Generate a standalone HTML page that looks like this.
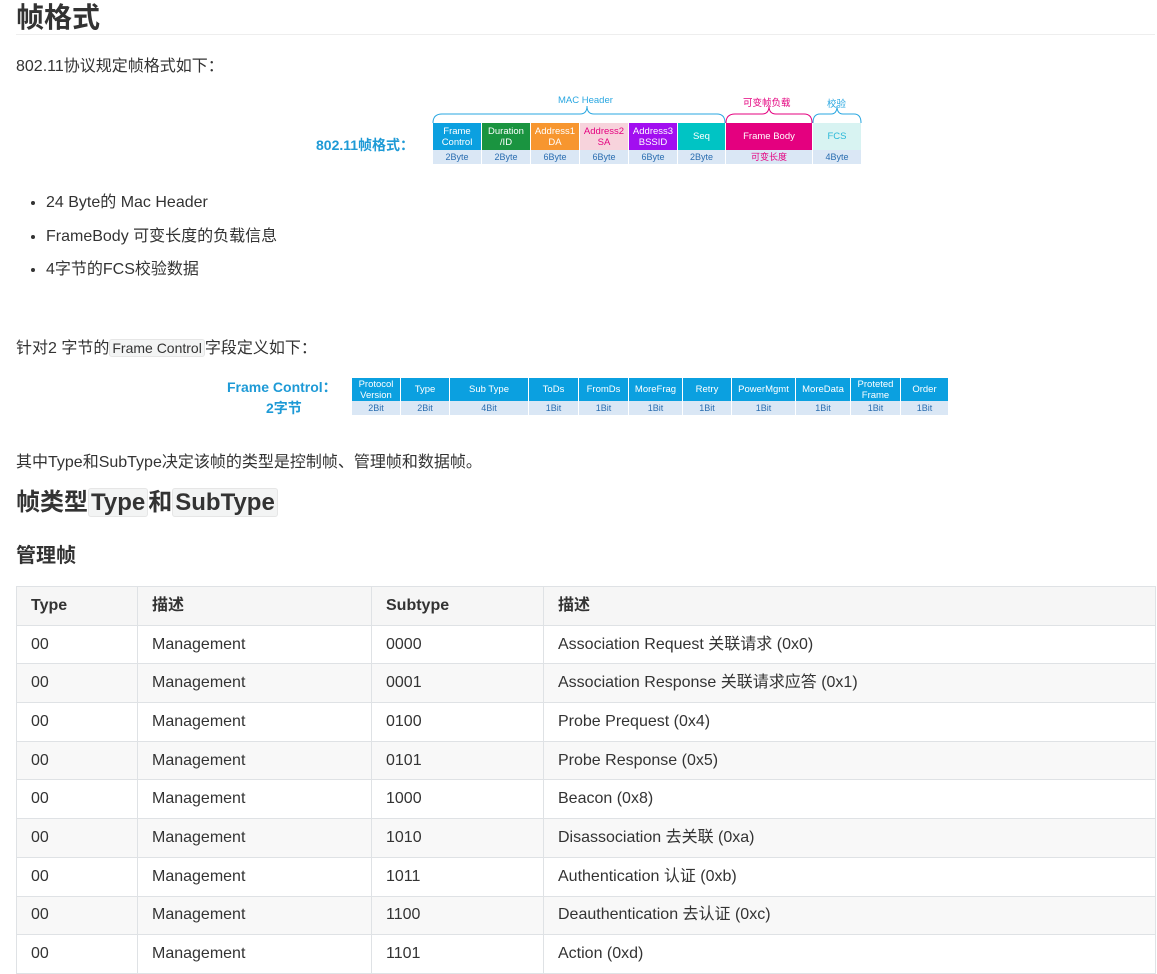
<!DOCTYPE html><html><head><meta charset="utf-8"><style>
body{margin:0;background:#fff;color:#333;font-family:"Liberation Sans","Noto Sans CJK SC",sans-serif;font-size:16px;width:1157px;height:958px;overflow:hidden;position:relative}
.a{position:absolute;white-space:nowrap}
h1{position:absolute;left:16px;top:0;margin:0;font-size:28px;font-weight:bold;line-height:36px;width:1139px;border-bottom:1px solid #eee;height:34px}
code{background:#f3f4f4;border:1px solid #e6e6e6;border-radius:3px;padding:0 2px;font-family:"Liberation Sans","Noto Sans CJK SC",sans-serif}
.c{position:absolute;color:#fff;font-size:9.5px;line-height:11px;text-align:center;display:flex;align-items:center;justify-content:center}
.b{position:absolute;background:#dae7f5;color:#2a6db0;font-size:9px;text-align:center;line-height:14px}
table{position:absolute;left:16px;top:586px;width:1140px;border-collapse:collapse;font-size:16px;table-layout:fixed}
tr{height:38.7px}
td,th{border:1px solid #dfe2e5;padding:0 14px;text-align:left;line-height:20px;height:20px;vertical-align:middle;overflow:hidden;white-space:nowrap}
th{background:#f6f6f6;font-weight:bold}
tr:nth-child(odd) td{background:#f8f8f8}
li{margin:0;height:33.5px}
</style></head><body>
<h1>帧格式</h1>
<div class="a" style="left:16px;top:52px">802.11协议规定帧格式如下：</div>
<svg class="a" style="left:0;top:0" width="1157" height="180">
<path d="M433 123 Q433 114 442 114 L580 114 Q587 114 587 106 Q587 114 594 114 L717 114 Q725 114 725 123" fill="none" stroke="#29a7e1"/>
<path d="M726 123 Q726 114 735 114 L762 114 Q769 114 769 106 Q769 114 776 114 L804 114 Q812 114 812 123" fill="none" stroke="#e4007f"/>
<path d="M813 123 Q813 114 820 114 L831 114 Q837 114 837 106 Q837 114 843 114 L854 114 Q861 114 861 123" fill="none" stroke="#29a7e1"/>
</svg>
<div class="a" style="left:558px;top:95px;font-size:9.5px;color:#29a7e1">MAC Header</div>
<div class="a" style="left:743px;top:95px;font-size:9.5px;color:#e4007f">可变帧负载</div>
<div class="a" style="left:827px;top:96px;font-size:9.5px;color:#29a7e1">校验</div>
<div class="a" style="left:316px;top:135px;font-size:14px;font-weight:bold;color:#1e9ad6">802.11帧格式：</div>
<div class="c" style="left:433px;top:123px;width:48px;height:27px;background:#0ba0e0">Frame<br>Control</div>
<div class="c" style="left:482px;top:123px;width:48px;height:27px;background:#1a9440">Duration<br>/ID</div>
<div class="c" style="left:531px;top:123px;width:48px;height:27px;background:#f7962f">Address1<br>DA</div>
<div class="c" style="left:580px;top:123px;width:48px;height:27px;background:#f7d3dc;color:#e4007f">Address2<br>SA</div>
<div class="c" style="left:629px;top:123px;width:48px;height:27px;background:#a20ef0">Address3<br>BSSID</div>
<div class="c" style="left:678px;top:123px;width:47px;height:27px;background:#00c4c4">Seq</div>
<div class="c" style="left:726px;top:123px;width:86px;height:27px;background:#e4007f">Frame Body</div>
<div class="c" style="left:813px;top:123px;width:48px;height:27px;background:#d8f3f2;color:#29b8d8">FCS</div>
<div class="b" style="left:433px;top:150px;width:48px">2Byte</div>
<div class="b" style="left:482px;top:150px;width:48px">2Byte</div>
<div class="b" style="left:531px;top:150px;width:48px">6Byte</div>
<div class="b" style="left:580px;top:150px;width:48px">6Byte</div>
<div class="b" style="left:629px;top:150px;width:48px">6Byte</div>
<div class="b" style="left:678px;top:150px;width:47px">2Byte</div>
<div class="b" style="left:726px;top:150px;width:86px;color:#e4007f">可变长度</div>
<div class="b" style="left:813px;top:150px;width:48px">4Byte</div>
<ul style="position:absolute;left:6px;top:186px;margin:0;padding-left:40px;line-height:33.5px">
<li>24 Byte的 Mac Header</li><li>FrameBody 可变长度的负载信息</li><li>4字节的FCS校验数据</li></ul>
<div class="a" style="left:16px;top:334px">针对2 字节的<code style="font-size:14px">Frame Control</code>字段定义如下：</div>
<div class="a" style="left:227px;top:377px;font-size:14px;font-weight:bold;color:#1e9ad6">Frame Control：</div>
<div class="a" style="left:266px;top:398px;font-size:14px;font-weight:bold;color:#1e9ad6">2字节</div>
<div class="c" style="left:352px;top:378px;width:48px;height:23px;background:#0ba0e0">Protocol<br>Version</div>
<div class="c" style="left:401px;top:378px;width:48px;height:23px;background:#0ba0e0">Type</div>
<div class="c" style="left:450px;top:378px;width:78px;height:23px;background:#0ba0e0">Sub Type</div>
<div class="c" style="left:529px;top:378px;width:49px;height:23px;background:#0ba0e0">ToDs</div>
<div class="c" style="left:579px;top:378px;width:49px;height:23px;background:#0ba0e0">FromDs</div>
<div class="c" style="left:629px;top:378px;width:53px;height:23px;background:#0ba0e0">MoreFrag</div>
<div class="c" style="left:683px;top:378px;width:48px;height:23px;background:#0ba0e0">Retry</div>
<div class="c" style="left:732px;top:378px;width:63px;height:23px;background:#0ba0e0">PowerMgmt</div>
<div class="c" style="left:796px;top:378px;width:54px;height:23px;background:#0ba0e0">MoreData</div>
<div class="c" style="left:851px;top:378px;width:49px;height:23px;background:#0ba0e0">Proteted<br>Frame</div>
<div class="c" style="left:901px;top:378px;width:47px;height:23px;background:#0ba0e0">Order</div>
<div class="b" style="left:352px;top:401px;width:48px">2Bit</div>
<div class="b" style="left:401px;top:401px;width:48px">2Bit</div>
<div class="b" style="left:450px;top:401px;width:78px">4Bit</div>
<div class="b" style="left:529px;top:401px;width:49px">1Bit</div>
<div class="b" style="left:579px;top:401px;width:49px">1Bit</div>
<div class="b" style="left:629px;top:401px;width:53px">1Bit</div>
<div class="b" style="left:683px;top:401px;width:48px">1Bit</div>
<div class="b" style="left:732px;top:401px;width:63px">1Bit</div>
<div class="b" style="left:796px;top:401px;width:54px">1Bit</div>
<div class="b" style="left:851px;top:401px;width:49px">1Bit</div>
<div class="b" style="left:901px;top:401px;width:47px">1Bit</div>
<div class="a" style="left:16px;top:448px">其中Type和SubType决定该帧的类型是控制帧、管理帧和数据帧。</div>
<div class="a" style="left:16px;top:485px;font-size:24px;font-weight:bold;line-height:36px">帧类型<code>Type</code>和<code>SubType</code></div>
<div class="a" style="left:16px;top:539px;font-size:20px;font-weight:bold">管理帧</div>
<table>
<colgroup><col style="width:121px"><col style="width:234px"><col style="width:172px"><col></colgroup>
<tr><th>Type</th><th>描述</th><th>Subtype</th><th>描述</th></tr>
<tr><td>00</td><td>Management</td><td>0000</td><td>Association Request 关联请求 (0x0)</td></tr>
<tr><td>00</td><td>Management</td><td>0001</td><td>Association Response 关联请求应答 (0x1)</td></tr>
<tr><td>00</td><td>Management</td><td>0100</td><td>Probe Prequest (0x4)</td></tr>
<tr><td>00</td><td>Management</td><td>0101</td><td>Probe Response (0x5)</td></tr>
<tr><td>00</td><td>Management</td><td>1000</td><td>Beacon (0x8)</td></tr>
<tr><td>00</td><td>Management</td><td>1010</td><td>Disassociation 去关联 (0xa)</td></tr>
<tr><td>00</td><td>Management</td><td>1011</td><td>Authentication 认证 (0xb)</td></tr>
<tr><td>00</td><td>Management</td><td>1100</td><td>Deauthentication 去认证 (0xc)</td></tr>
<tr><td>00</td><td>Management</td><td>1101</td><td>Action (0xd)</td></tr>
</table>
</body></html>
